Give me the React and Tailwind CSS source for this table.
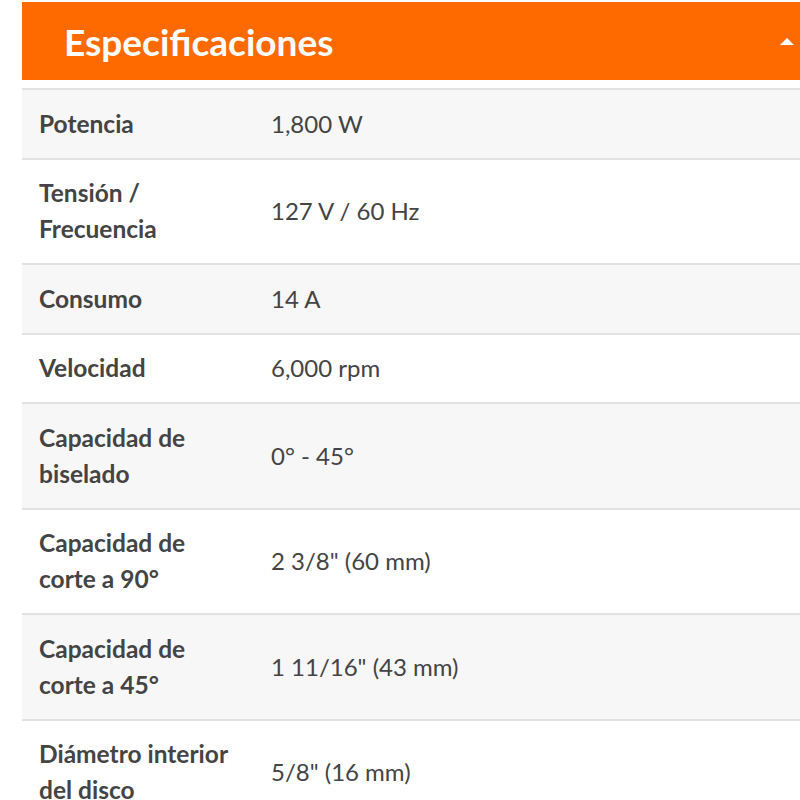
import React from 'react';

const specs = [
  { label: "Potencia", value: "1,800 W" },
  { label: "Tensión / Frecuencia", value: "127 V / 60 Hz" },
  { label: "Consumo", value: "14 A" },
  { label: "Velocidad", value: "6,000 rpm" },
  { label: "Capacidad de biselado", value: "0° - 45°" },
  { label: "Capacidad de corte a 90°", value: "2 3/8\" (60 mm)" },
  { label: "Capacidad de corte a 45°", value: "1 11/16\" (43 mm)" },
  { label: "Diámetro interior del disco", value: "5/8\" (16 mm)" },
];

const App = () => {
  return (
    <div className="w-[800px] h-[800px] overflow-hidden bg-white font-['Lato','Liberation_Sans',sans-serif] text-[#444]">
      <div className="ml-[22px] w-[800px] pt-[2px]">
        {/* Header */}
        <div className="h-[78px] bg-[#ff6a00] flex items-center justify-between pl-[42px] pr-[28px]">
          <h2 className="text-[37px] font-bold text-white leading-none">Especificaciones</h2>
          <svg width="14" height="7" viewBox="0 0 14 7">
            <polygon points="7,0 14,7 0,7" fill="#fff" />
          </svg>
        </div>

        {/* Specs table */}
        <div className="mt-[8px] border-t-2 border-[#e2e2e2]">
          {specs.map((spec, i) => (
            <div
              key={spec.label}
              className={`flex items-center border-b-2 border-[#e2e2e2] py-[15.75px] leading-[36px] ${
                i % 2 === 0 ? "bg-[#f7f7f7]" : "bg-white"
              }`}
            >
              <div className="w-[232px] shrink-0 pl-[17px] pr-[14px] text-[24.5px] font-bold">{spec.label}</div>
              <div className="pl-[17px] text-[24px]">{spec.value}</div>
            </div>
          ))}
        </div>
      </div>
    </div>
  );
};

export default App;
